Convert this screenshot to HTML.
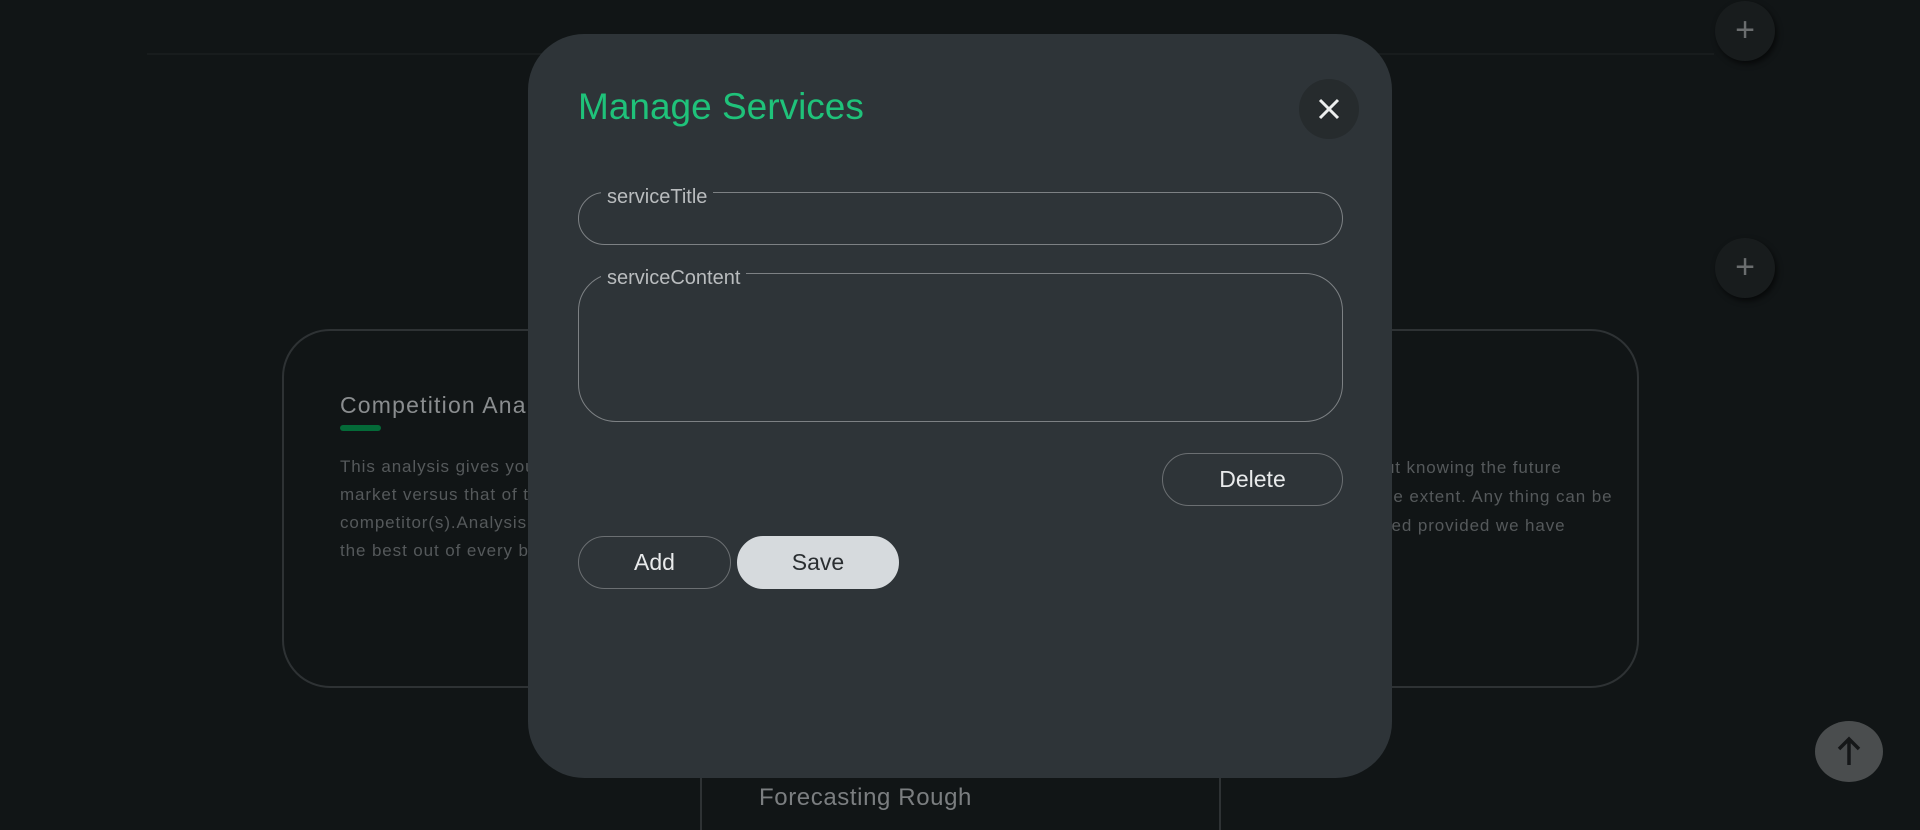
<!DOCTYPE html>
<html><head><meta charset="utf-8"><style>
*{box-sizing:border-box;margin:0;padding:0}
body{width:1920px;height:812px;background:#111516;position:relative;overflow:hidden;font-family:"Liberation Sans",sans-serif}
.abs{position:absolute}
.plus{position:absolute;width:60px;height:60px;border-radius:50%;background:#181c1d;box-shadow:2px 3px 6px rgba(0,0,0,.6);color:#6a6d6e;font-size:34px;line-height:58px;text-align:center}
.card{position:absolute;border:2px solid #2e3234;border-radius:48px}
.txt{color:#55595b;font-size:17px;line-height:28px;letter-spacing:0.9px;white-space:nowrap}
.modal{position:absolute;left:528px;top:34px;width:864px;height:744px;background:#2e3438;border-radius:56px}
.fs{position:absolute;border:1px solid #7d8184;margin:0;padding:0}
.fs legend{margin-left:22px;padding:0 6px;color:#b9bcbe;font-size:20px;line-height:22px;height:14px;position:relative;top:1px}
.btn{position:absolute;height:53px;border:1px solid #6b6f72;border-radius:27px;color:#e8eaeb;font-size:23px;line-height:51px;text-align:center}
</style></head><body>
<div class="abs" style="left:147px;top:53px;width:1567px;height:2px;background:#181c1d"></div>
<div class="plus" style="left:1715px;top:1px">+</div>
<div class="plus" style="left:1715px;top:238px">+</div>

<div class="card" style="left:282px;top:329px;width:600px;height:359px"></div>
<div class="abs" style="left:340px;top:392px;color:#8a8d8f;font-size:23px;letter-spacing:1.2px">Competition Analysis</div>
<div class="abs" style="left:340px;top:425px;width:41px;height:6px;border-radius:3px;background:#046a38"></div>
<div class="abs txt" style="left:340px;top:453px;width:460px">This analysis gives your business in the<br>market versus that of the market of your<br>competitor(s).Analysis helps you to get<br>the best out of every business.</div>

<div class="card" style="left:1100px;top:329px;width:539px;height:359px"></div>
<div class="abs txt" style="left:1337px;top:453px;width:300px;line-height:29px">Without knowing the future<br>to some extent. Any thing can be<br>achieved provided we have</div>

<div class="abs" style="left:700px;top:770px;width:521px;height:60px;border-left:2px solid #2e3234;border-right:2px solid #2e3234"></div>
<div class="abs" style="left:759px;top:784px;color:#7b7e80;font-size:24px;letter-spacing:0.6px">Forecasting Rough</div>

<div class="abs" style="left:1815px;top:721px;width:68px;height:61px;border-radius:50%;background:#4a4d4e">
<svg width="68" height="61" viewBox="0 0 68 61"><path d="M34 44V18M24 28L34 18L44 28" stroke="#151718" stroke-width="3.5" fill="none"/></svg></div>

<div class="modal">
<div class="abs" style="left:50px;top:52px;color:#1fc27a;font-size:37px">Manage Services</div>
<div class="abs" style="left:771px;top:45px;width:60px;height:60px;border-radius:50%;background:#262b2d">
<svg width="60" height="60" viewBox="0 0 60 60"><path d="M21 21L39 39M39 21L21 39" stroke="#eceeee" stroke-width="3"/></svg></div>
<fieldset class="fs" style="left:50px;top:151px;width:765px;height:60px;border-radius:30px"><legend>serviceTitle</legend></fieldset>
<fieldset class="fs" style="left:50px;top:232px;width:765px;height:156px;border-radius:38px"><legend>serviceContent</legend></fieldset>
<div class="btn" style="left:634px;top:419px;width:181px">Delete</div>
<div class="btn" style="left:50px;top:502px;width:153px">Add</div>
<div class="btn" style="left:209px;top:502px;width:162px;background:#d6dadd;color:#2a2e31;border-color:#d6dadd">Save</div>
</div>
</body></html>
